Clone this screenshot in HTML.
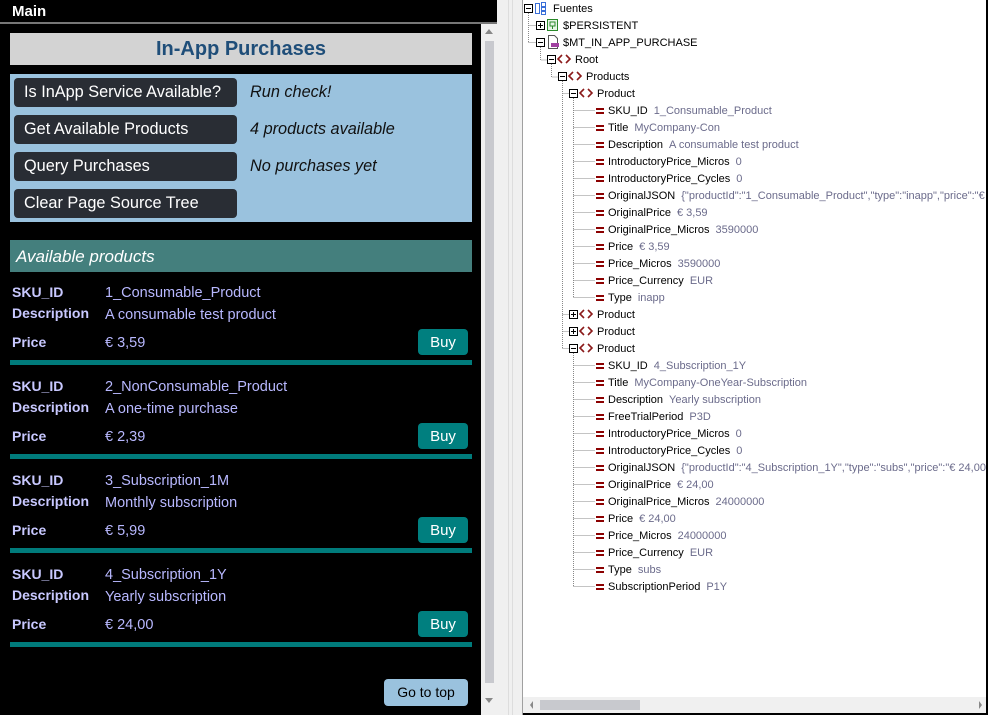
<!DOCTYPE html>
<html><head><meta charset="utf-8"><style>
*{margin:0;padding:0;box-sizing:border-box}
body{width:988px;height:715px;overflow:hidden;background:#000;font-family:"Liberation Sans",sans-serif;position:relative}
.a{position:absolute}
.btn{position:absolute;left:14px;width:223px;height:29px;background:#292d34;border-radius:4px;color:#fff;font-size:16.3px;line-height:29px;padding-left:10px}
.lbl{position:absolute;left:250px;font-size:16.3px;font-style:italic;color:#111;line-height:29px}
.k{position:absolute;left:12px;color:#c8c8ff;font-weight:bold;font-size:14px}
.v{position:absolute;left:105px;color:#b8b8ff;font-size:14.5px}
.buy{position:absolute;left:418px;width:50px;height:26px;background:#007f7f;border-radius:4px;color:#fff;font-size:15px;line-height:27px;text-align:center}
.bar{position:absolute;left:10px;width:462px;height:5px;background:#007b7b}
</style></head><body>
<div class="a" style="left:0;top:0;width:497px;height:22px;background:#000;color:#fff;font-weight:bold;font-size:15px;padding-left:12px;line-height:24px">Main</div>
<div class="a" style="left:0;top:22px;width:497px;height:2px;background:#777"></div>
<div class="a" style="left:10px;top:33px;width:462px;height:32px;background:#d3d3d3;color:#1f4e79;font-weight:bold;font-size:20px;text-align:center;line-height:32px">In-App Purchases</div>
<div class="a" style="left:10px;top:74px;width:462px;height:148px;background:#9ac2de"></div>
<div class="btn" style="top:78px">Is InApp Service Available?</div><div class="lbl" style="top:78px">Run check!</div>
<div class="btn" style="top:115px">Get Available Products</div><div class="lbl" style="top:115px">4 products available</div>
<div class="btn" style="top:152px">Query Purchases</div><div class="lbl" style="top:152px">No purchases yet</div>
<div class="btn" style="top:189px">Clear Page Source Tree</div>
<div class="a" style="left:10px;top:240px;width:462px;height:32px;background:#447f7d;color:#fff;font-style:italic;font-size:17px;line-height:33px;padding-left:6px">Available products</div>

<div class="a" style="left:0;top:284px;width:480px;height:90px">
<div class="k" style="top:0">SKU_ID</div><div class="v" style="top:1px">1_Consumable_Product</div>
<div class="k" style="top:21px">Description</div><div class="v" style="top:23px">A consumable test product</div>
<div class="k" style="top:50px">Price</div><div class="v" style="top:51px">€ 3,59</div>
<div class="buy" style="top:45px">Buy</div><div class="bar" style="top:76px"></div></div>
<div class="a" style="left:0;top:378px;width:480px;height:90px">
<div class="k" style="top:0">SKU_ID</div><div class="v" style="top:1px">2_NonConsumable_Product</div>
<div class="k" style="top:21px">Description</div><div class="v" style="top:23px">A one-time purchase</div>
<div class="k" style="top:50px">Price</div><div class="v" style="top:51px">€ 2,39</div>
<div class="buy" style="top:45px">Buy</div><div class="bar" style="top:76px"></div></div>
<div class="a" style="left:0;top:472px;width:480px;height:90px">
<div class="k" style="top:0">SKU_ID</div><div class="v" style="top:1px">3_Subscription_1M</div>
<div class="k" style="top:21px">Description</div><div class="v" style="top:23px">Monthly subscription</div>
<div class="k" style="top:50px">Price</div><div class="v" style="top:51px">€ 5,99</div>
<div class="buy" style="top:45px">Buy</div><div class="bar" style="top:76px"></div></div>
<div class="a" style="left:0;top:566px;width:480px;height:90px">
<div class="k" style="top:0">SKU_ID</div><div class="v" style="top:1px">4_Subscription_1Y</div>
<div class="k" style="top:21px">Description</div><div class="v" style="top:23px">Yearly subscription</div>
<div class="k" style="top:50px">Price</div><div class="v" style="top:51px">€ 24,00</div>
<div class="buy" style="top:45px">Buy</div><div class="bar" style="top:76px"></div></div>
<div class="a" style="left:384px;top:679px;width:84px;height:27px;background:#9ac2de;border-radius:4px;color:#000;font-size:14px;line-height:27px;text-align:center">Go to top</div>

<div class="a" style="left:481px;top:24px;width:16px;height:691px;background:#f0f0f0"></div>
<div class="a" style="left:485px;top:41px;width:9px;height:642px;background:#c8c9ce"></div>
<svg class="a" style="left:481px;top:24px" width="16" height="691"><path d="M4 10h8l-4-5z" fill="#888"/><path d="M4 674h8l-4 5z" fill="#888"/></svg>
<div class="a" style="left:497px;top:0;width:25px;height:715px;background:#f0f0f0"></div>
<div class="a" style="left:508px;top:0;width:1px;height:715px;background:#ddd"></div>
<div class="a" style="left:512px;top:0;width:1px;height:715px;background:#ddd"></div>
<div class="a" style="left:522px;top:0;width:1px;height:715px;background:#a0a0a0"></div>
<div class="a" style="left:523px;top:0;width:465px;height:715px;background:#fff;border-right:2px solid #000;border-bottom:2px solid #000;overflow:hidden">
<svg width="465" height="715" style="font-family:'Liberation Sans',sans-serif;font-size:11px">
<g transform="translate(-523,0)">
<g stroke="#888" stroke-dasharray="1,1" fill="none">
<path d="M528.5 13v30M528.5 25.5h8M528.5 42.5h8M540.5 47v13h7M551.5 64v13h7M562.5 81v268M562.5 93.5h7M562.5 314.5h7M562.5 331.5h7M562.5 348.5h7M573.5 98v199M573.5 353v233"/>
<path d="M573.5 110.5h22M573.5 127.5h22M573.5 144.5h22M573.5 161.5h22M573.5 178.5h22M573.5 195.5h22M573.5 212.5h22M573.5 229.5h22M573.5 246.5h22M573.5 263.5h22M573.5 280.5h22M573.5 297.5h22"/>
<path d="M573.5 365.5h22M573.5 382.5h22M573.5 399.5h22M573.5 416.5h22M573.5 433.5h22M573.5 450.5h22M573.5 467.5h22M573.5 484.5h22M573.5 501.5h22M573.5 518.5h22M573.5 535.5h22M573.5 552.5h22M573.5 569.5h22M573.5 586.5h22"/>
</g>
<g fill="#fff" stroke="#000">
<rect x="524.5" y="4.5" width="8" height="8"/><rect x="536.5" y="21.5" width="8" height="8"/><rect x="536.5" y="38.5" width="8" height="8"/><rect x="547.5" y="55.5" width="8" height="8"/><rect x="558.5" y="72.5" width="8" height="8"/><rect x="569.5" y="89.5" width="8" height="8"/><rect x="569.5" y="310.5" width="8" height="8"/><rect x="569.5" y="327.5" width="8" height="8"/><rect x="569.5" y="344.5" width="8" height="8"/>
</g>
<g stroke="#000"><path d="M526 8.5h5M538 25.5h5M540.5 23v5M538 42.5h5M549 59.5h5M560 76.5h5M571 93.5h5M571 314.5h5M573.5 312v5M571 331.5h5M573.5 329v5M571 348.5h5"/></g>
<g fill="none" stroke="#3a6fd8"><rect x="535.5" y="3.5" width="4" height="10"/><rect x="541.5" y="2.5" width="4" height="4"/><rect x="541.5" y="7.5" width="4" height="3"/><rect x="541.5" y="11.5" width="4" height="3"/></g>
<rect x="547.5" y="19.5" width="10" height="11" fill="#e6f4e6" stroke="#2a8a2a"/><path d="M550 22h5v4h-5zM552.5 26v3" stroke="#2a8a2a" fill="none"/>
<path d="M548.5 35.5h6l3 3v10h-9z" fill="#fff" stroke="#555"/><rect x="551" y="43" width="8" height="4" fill="#a040a0"/>
<g fill="none" stroke="#8b1a1a" stroke-width="1.6"><path d="M562 55l-4 4 4 4M566 55l4 4-4 4"/><path d="M573 72l-4 4 4 4M577 72l4 4-4 4"/><path d="M584 89l-4 4 4 4M588 89l4 4-4 4"/><path d="M584 310l-4 4 4 4M588 310l4 4-4 4"/><path d="M584 327l-4 4 4 4M588 327l4 4-4 4"/><path d="M584 344l-4 4 4 4M588 344l4 4-4 4"/></g>
<g fill="#8b0000">
<path d="M596 108h8v2h-8zM596 112h8v2h-8z"/><path d="M596 125h8v2h-8zM596 129h8v2h-8z"/><path d="M596 142h8v2h-8zM596 146h8v2h-8z"/><path d="M596 159h8v2h-8zM596 163h8v2h-8z"/><path d="M596 176h8v2h-8zM596 180h8v2h-8z"/><path d="M596 193h8v2h-8zM596 197h8v2h-8z"/><path d="M596 210h8v2h-8zM596 214h8v2h-8z"/><path d="M596 227h8v2h-8zM596 231h8v2h-8z"/><path d="M596 244h8v2h-8zM596 248h8v2h-8z"/><path d="M596 261h8v2h-8zM596 265h8v2h-8z"/><path d="M596 278h8v2h-8zM596 282h8v2h-8z"/><path d="M596 295h8v2h-8zM596 299h8v2h-8z"/>
<path d="M596 363h8v2h-8zM596 367h8v2h-8z"/><path d="M596 380h8v2h-8zM596 384h8v2h-8z"/><path d="M596 397h8v2h-8zM596 401h8v2h-8z"/><path d="M596 414h8v2h-8zM596 418h8v2h-8z"/><path d="M596 431h8v2h-8zM596 435h8v2h-8z"/><path d="M596 448h8v2h-8zM596 452h8v2h-8z"/><path d="M596 465h8v2h-8zM596 469h8v2h-8z"/><path d="M596 482h8v2h-8zM596 486h8v2h-8z"/><path d="M596 499h8v2h-8zM596 503h8v2h-8z"/><path d="M596 516h8v2h-8zM596 520h8v2h-8z"/><path d="M596 533h8v2h-8zM596 537h8v2h-8z"/><path d="M596 550h8v2h-8zM596 554h8v2h-8z"/><path d="M596 567h8v2h-8zM596 571h8v2h-8z"/><path d="M596 584h8v2h-8zM596 588h8v2h-8z"/>
</g>
<g fill="#000">
<text x="553" y="12">Fuentes</text><text x="563" y="29">$PERSISTENT</text><text x="563" y="46">$MT_IN_APP_PURCHASE</text><text x="575" y="63">Root</text><text x="586" y="80">Products</text><text x="597" y="97">Product</text><text x="597" y="318">Product</text><text x="597" y="335">Product</text><text x="597" y="352">Product</text>
</g>
<g fill="#000">
<text x="608" y="114">SKU_ID<tspan fill="#6b6b8b" dx="6">1_Consumable_Product</tspan></text>
<text x="608" y="131">Title<tspan fill="#6b6b8b" dx="6">MyCompany-Con</tspan></text>
<text x="608" y="148">Description<tspan fill="#6b6b8b" dx="6">A consumable test product</tspan></text>
<text x="608" y="165">IntroductoryPrice_Micros<tspan fill="#6b6b8b" dx="6">0</tspan></text>
<text x="608" y="182">IntroductoryPrice_Cycles<tspan fill="#6b6b8b" dx="6">0</tspan></text>
<text x="608" y="199">OriginalJSON<tspan fill="#6b6b8b" dx="6">{"productId":"1_Consumable_Product","type":"inapp","price":"€ 3,59"}</tspan></text>
<text x="608" y="216">OriginalPrice<tspan fill="#6b6b8b" dx="6">€ 3,59</tspan></text>
<text x="608" y="233">OriginalPrice_Micros<tspan fill="#6b6b8b" dx="6">3590000</tspan></text>
<text x="608" y="250">Price<tspan fill="#6b6b8b" dx="6">€ 3,59</tspan></text>
<text x="608" y="267">Price_Micros<tspan fill="#6b6b8b" dx="6">3590000</tspan></text>
<text x="608" y="284">Price_Currency<tspan fill="#6b6b8b" dx="6">EUR</tspan></text>
<text x="608" y="301">Type<tspan fill="#6b6b8b" dx="6">inapp</tspan></text>
<text x="608" y="369">SKU_ID<tspan fill="#6b6b8b" dx="6">4_Subscription_1Y</tspan></text>
<text x="608" y="386">Title<tspan fill="#6b6b8b" dx="6">MyCompany-OneYear-Subscription</tspan></text>
<text x="608" y="403">Description<tspan fill="#6b6b8b" dx="6">Yearly subscription</tspan></text>
<text x="608" y="420">FreeTrialPeriod<tspan fill="#6b6b8b" dx="6">P3D</tspan></text>
<text x="608" y="437">IntroductoryPrice_Micros<tspan fill="#6b6b8b" dx="6">0</tspan></text>
<text x="608" y="454">IntroductoryPrice_Cycles<tspan fill="#6b6b8b" dx="6">0</tspan></text>
<text x="608" y="471">OriginalJSON<tspan fill="#6b6b8b" dx="6">{"productId":"4_Subscription_1Y","type":"subs","price":"€ 24,00"}</tspan></text>
<text x="608" y="488">OriginalPrice<tspan fill="#6b6b8b" dx="6">€ 24,00</tspan></text>
<text x="608" y="505">OriginalPrice_Micros<tspan fill="#6b6b8b" dx="6">24000000</tspan></text>
<text x="608" y="522">Price<tspan fill="#6b6b8b" dx="6">€ 24,00</tspan></text>
<text x="608" y="539">Price_Micros<tspan fill="#6b6b8b" dx="6">24000000</tspan></text>
<text x="608" y="556">Price_Currency<tspan fill="#6b6b8b" dx="6">EUR</tspan></text>
<text x="608" y="573">Type<tspan fill="#6b6b8b" dx="6">subs</tspan></text>
<text x="608" y="590">SubscriptionPeriod<tspan fill="#6b6b8b" dx="6">P1Y</tspan></text>
</g>
<rect x="523" y="697" width="463" height="16" fill="#f0f0f0"/>
<rect x="540" y="700" width="100" height="10" fill="#c8c9ce"/>
<path d="M533 701v8l-3-4zM979 701v8l3-4z" fill="#888"/>
</g></svg></div>
</body></html>
